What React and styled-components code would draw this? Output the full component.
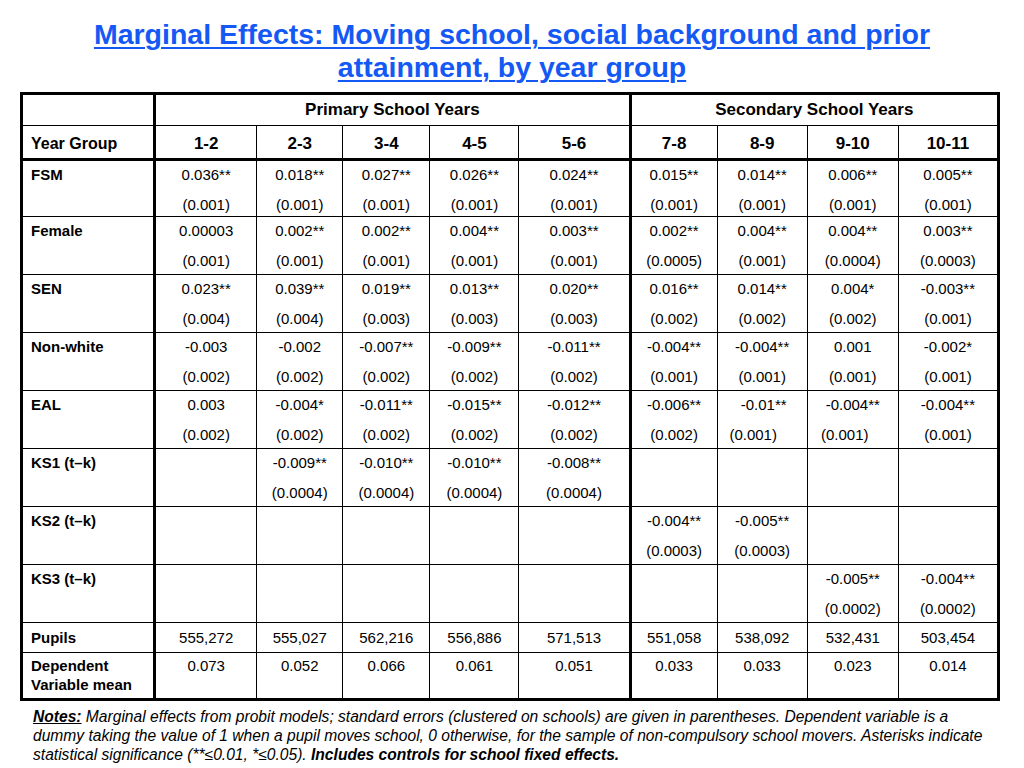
import styled, { createGlobalStyle } from "styled-components";

const GlobalStyle = createGlobalStyle`
  body {
    margin: 0;
    background: #ffffff;
    font-family: "Liberation Sans", Arial, sans-serif;
    color: #000000;
  }
`;

const Page = styled.div`
  width: 1024px;
  height: 768px;
  overflow: hidden;
`;

const Title = styled.h1`
  margin: 0;
  padding-top: 18px;
  text-align: center;
  font-size: 28.5px;
  font-weight: bold;
  line-height: 33px;
  color: #1559f5;
  text-decoration: underline;
  text-decoration-thickness: 2px;
  text-underline-offset: 3px;
`;

const Table = styled.table`
  margin: 8px 0 0 20px;
  width: 980px;
  border-collapse: collapse;
  table-layout: fixed;
  border: 3px solid #000;
`;

const Cell = styled.td`
  border: 1px solid #000;
  border-left-width: ${(p) => (p.$thickLeft ? "3px" : "1px")};
  border-bottom-width: ${(p) => (p.$thickBottom ? "3px" : "1px")};
  padding: ${(p) => p.$pad || "0"};
  padding-left: ${(p) => (p.$label ? "8px" : "0")};
  height: ${(p) => p.$h}px;
  vertical-align: ${(p) => (p.$middle ? "middle" : "top")};
  text-align: ${(p) => (p.$label ? "left" : "center")};
  font-weight: ${(p) => (p.$bold ? "bold" : "normal")};
  font-size: ${(p) => p.$fs || 15}px;
  line-height: ${(p) => p.$lh || 20}px;
`;

const Value = styled.div`
  line-height: 28px;
  padding-left: ${(p) => (p.$dx > 0 ? p.$dx : 0)}px;
  padding-right: ${(p) => (p.$dx < 0 ? -p.$dx : 0)}px;
`;

const Err = styled.div`
  margin-top: 6px;
  line-height: 20px;
  padding-left: ${(p) => (p.$dx > 0 ? p.$dx : 0)}px;
  padding-right: ${(p) => (p.$dx < 0 ? -p.$dx : 0)}px;
`;

const Notes = styled.p`
  margin: 6px 0 0 0;
  padding-left: 33px;
  font-size: 15.6px;
  font-style: italic;
  line-height: 19px;
  white-space: nowrap;
`;

const NotesLabel = styled.span`
  font-weight: bold;
  text-decoration: underline;
`;

const Strong = styled.span`
  font-weight: bold;
`;

const primary = ["1-2", "2-3", "3-4", "4-5", "5-6"];
const secondary = ["7-8", "8-9", "9-10", "10-11"];
const colWidths = [133, 102, 86, 87, 89, 111, 87, 90, 91, 100];

// [value, standard error, shift of value, shift of error]
const rows = [
  ["FSM", [["0.036**", "(0.001)"], ["0.018**", "(0.001)"], ["0.027**", "(0.001)"], ["0.026**", "(0.001)"], ["0.024**", "(0.001)"], ["0.015**", "(0.001)"], ["0.014**", "(0.001)"], ["0.006**", "(0.001)"], ["0.005**", "(0.001)"]]],
  ["Female", [["0.00003", "(0.001)"], ["0.002**", "(0.001)"], ["0.002**", "(0.001)"], ["0.004**", "(0.001)"], ["0.003**", "(0.001)"], ["0.002**", "(0.0005)"], ["0.004**", "(0.001)"], ["0.004**", "(0.0004)"], ["0.003**", "(0.0003)"]]],
  ["SEN", [["0.023**", "(0.004)"], ["0.039**", "(0.004)"], ["0.019**", "(0.003)"], ["0.013**", "(0.003)"], ["0.020**", "(0.003)"], ["0.016**", "(0.002)"], ["0.014**", "(0.002)"], ["0.004*", "(0.002)"], ["-0.003**", "(0.001)"]]],
  ["Non-white", [["-0.003", "(0.002)"], ["-0.002", "(0.002)"], ["-0.007**", "(0.002)"], ["-0.009**", "(0.002)"], ["-0.011**", "(0.002)"], ["-0.004**", "(0.001)"], ["-0.004**", "(0.001)"], ["0.001", "(0.001)"], ["-0.002*", "(0.001)"]]],
  ["EAL", [["0.003", "(0.002)"], ["-0.004*", "(0.002)"], ["-0.011**", "(0.002)"], ["-0.015**", "(0.002)"], ["-0.012**", "(0.002)"], ["-0.006**", "(0.002)"], ["-0.01**", "(0.001)", 3, -18], ["-0.004**", "(0.001)", 0, -16], ["-0.004**", "(0.001)"]]],
  ["KS1 (t\u2013k)", [null, ["-0.009**", "(0.0004)"], ["-0.010**", "(0.0004)"], ["-0.010**", "(0.0004)"], ["-0.008**", "(0.0004)"], null, null, null, null]],
  ["KS2 (t\u2013k)", [null, null, null, null, null, ["-0.004**", "(0.0003)"], ["-0.005**", "(0.0003)"], null, null]],
  ["KS3 (t\u2013k)", [null, null, null, null, null, null, null, ["-0.005**", "(0.0002)"], ["-0.004**", "(0.0002)"]]],
];

const pupils = ["555,272", "555,027", "562,216", "556,886", "571,513", "551,058", "538,092", "532,431", "503,454"];
const means = ["0.073", "0.052", "0.066", "0.061", "0.051", "0.033", "0.033", "0.023", "0.014"];

const isSplit = (i) => i === 0 || i === 5;

const App = () => {
  return (
    <Page>
      <GlobalStyle />
      <Title>
        Marginal Effects: Moving school, social background and prior
        <br />
        attainment, by year group
      </Title>
      <Table>
        <colgroup>
          {colWidths.map((w, i) => (
            <col key={i} style={{ width: w }} />
          ))}
        </colgroup>
        <tbody>
          <tr>
            <Cell $h={30} $middle />
            <Cell $h={30} $middle $thickLeft $bold $fs={17} colSpan={5}>
              Primary School Years
            </Cell>
            <Cell $h={30} $middle $thickLeft $bold $fs={17} colSpan={4}>
              Secondary School Years
            </Cell>
          </tr>
          <tr>
            <Cell $h={29} $middle $label $bold $fs={16} $pad="3px 0 0 0" $thickBottom>
              Year Group
            </Cell>
            {primary.concat(secondary).map((y, i) => (
              <Cell key={y} $h={29} $middle $bold $fs={17} $pad="3px 0 0 0" $thickBottom $thickLeft={isSplit(i)}>
                {y}
              </Cell>
            ))}
          </tr>
          {rows.map(([label, vals], r) => (
            <tr key={label}>
              <Cell $h={r === 0 ? 55 : 57} $label $bold $lh={28}>
                {label}
              </Cell>
              {vals.map((v, i) => (
                <Cell key={i} $h={r === 0 ? 55 : 57} $thickLeft={isSplit(i)}>
                  {v ? (
                    <>
                      <Value $dx={v[2] || 0}>{v[0]}</Value>
                      <Err $dx={v[3] || 0}>{v[1]}</Err>
                    </>
                  ) : null}
                </Cell>
              ))}
            </tr>
          ))}
          <tr>
            <Cell $h={29} $middle $label $bold>
              Pupils
            </Cell>
            {pupils.map((v, i) => (
              <Cell key={i} $h={29} $middle $thickLeft={isSplit(i)}>
                {v}
              </Cell>
            ))}
          </tr>
          <tr>
            <Cell $h={42} $label $bold $lh={19} $pad="3px 0 0 0">
              Dependent
              <br />
              Variable mean
            </Cell>
            {means.map((v, i) => (
              <Cell key={i} $h={42} $lh={19} $pad="3px 0 0 0" $thickLeft={isSplit(i)}>
                {v}
              </Cell>
            ))}
          </tr>
        </tbody>
      </Table>
      <Notes>
        <NotesLabel>Notes:</NotesLabel> Marginal effects from probit models; standard errors (clustered on schools) are given in parentheses. Dependent variable is a
        <br />
        dummy taking the value of 1 when a pupil moves school, 0 otherwise, for the sample of non-compulsory school movers. Asterisks indicate
        <br />
        statistical significance (**≤0.01, *≤0.05). <Strong>Includes controls for school fixed effects.</Strong>
      </Notes>
    </Page>
  );
};

export default App;
